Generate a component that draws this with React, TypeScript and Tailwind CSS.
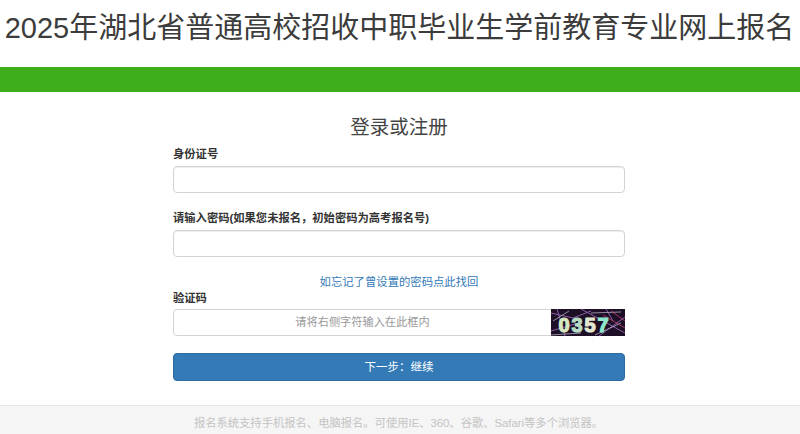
import React from 'react';

const cjk = '[font-family:"Liberation_Sans","Noto_Sans_CJK_SC",sans-serif]';

const Captcha = () => (
  <svg width="74" height="27" viewBox="0 0 74 27" className="-my-px -mr-px block shrink-0 overflow-visible">
    <rect width="74" height="27" fill="#1d1026" />
    <path d="M0 4L22 9L40 2M30 0L74 24M0 22L24 15M48 27L74 8M55 0L62 12M6 0L14 27" stroke="#8a5fa8" strokeWidth="1" fill="none" />
    <path d="M2 12L18 2M40 4L70 3M44 26L70 14M0 26L30 24" stroke="#c9c2d8" strokeWidth="0.7" fill="none" />
    <path d="M60 2L74 12M52 6L74 19" stroke="#d6487a" strokeWidth="0.7" fill="none" />
    <g fontFamily="Liberation Sans" fontWeight="700" fontSize="20" strokeWidth="1.2">
      <text x="7.5" y="22.7" fill="#d8e6c0" stroke="#d8e6c0">0</text>
      <text x="20.5" y="22.7" fill="#b8dcc4" stroke="#b8dcc4">3</text>
      <text x="33.5" y="22.7" fill="#e4e8d0" stroke="#e4e8d0">5</text>
      <text x="46.5" y="22.7" fill="#8ee8cc" stroke="#8ee8cc">7</text>
    </g>
  </svg>
);

export default function App() {
  return (
    <div className={`h-[434px] w-[800px] overflow-hidden bg-white text-[#333] ${cjk}`}>
      <h1 className="h-[67px] pt-[9px] pr-[1px] text-center text-[29px] leading-[38px] font-normal whitespace-nowrap text-[#3c3c3c]">
        2025年湖北省普通高校招收中职毕业生学前教育专业网上报名
      </h1>
      <div className="h-[25px] bg-[#3fae1c]" />

      <div className="ml-[173px] h-[313px] w-[452px]">
        <h2 className="pt-[23px] text-center text-[19.5px] leading-[24px] font-normal text-[#444]">登录或注册</h2>

        <label className="mt-[7px] block text-[11.3px] leading-[16px] font-bold">身份证号</label>
        <div className="mt-[4px] h-[27px] rounded border border-[#d4d4d4] bg-white shadow-[inset_0_1px_1px_rgba(0,0,0,0.075)]" />

        <label className="mt-[17px] block text-[11.3px] leading-[16px] font-bold">请输入密码(如果您未报名，初始密码为高考报名号)</label>
        <div className="mt-[4px] h-[27px] rounded border border-[#d4d4d4] bg-white shadow-[inset_0_1px_1px_rgba(0,0,0,0.075)]" />

        <div className="mt-[17px] text-center text-[11.35px] leading-[16px] text-[#337ab7]">如忘记了曾设置的密码点此找回</div>

        <label className="block text-[11.3px] leading-[16px] font-bold">验证码</label>
        <div className="mt-[3px] flex h-[27px] items-stretch rounded border border-[#d4d4d4] bg-white">
          <div className="flex-1 text-center text-[11.2px] leading-[25px] text-[#999]">请将右侧字符输入在此框内</div>
          <Captcha />
        </div>

        <button className="mt-[17px] block h-[28px] w-full rounded border border-[#2e6da4] bg-[#337ab7] text-center text-[11.5px] leading-[26px] text-white">
          下一步：继续
        </button>
      </div>

      <div className="h-[29px] border-t border-[#e7e7e7] bg-[#f5f5f5] pt-[9px] pr-[3px] text-center text-[11.3px] leading-[16px] text-[#c4c4c4]">
        报名系统支持手机报名、电脑报名。可使用IE、360、谷歌、Safari等多个浏览器。
      </div>
    </div>
  );
}
